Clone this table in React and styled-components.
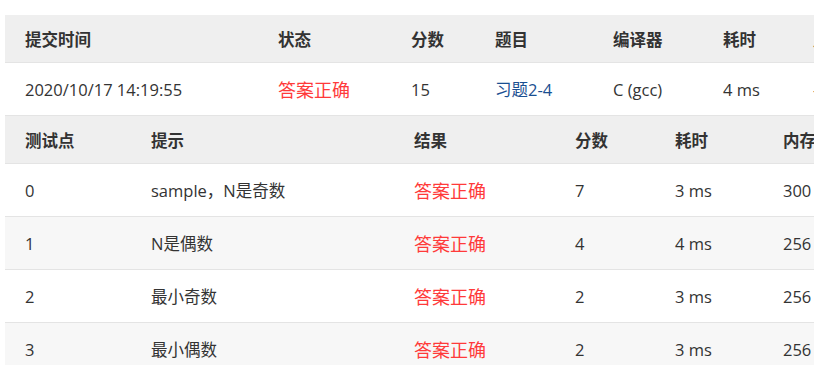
import React from 'react';
import styled, { createGlobalStyle } from 'styled-components';

const GlobalStyle = createGlobalStyle`
  html, body {
    margin: 0;
    padding: 0;
    background: #fff;
    overflow: hidden;
  }
  body {
    font-family: "Open Sans", "Noto Sans CJK SC", sans-serif;
    color: #333;
  }
`;

const Page = styled.div`
  padding: 15px 0 0 5px;
  width: 814px;
  height: 365px;
  box-sizing: border-box;
  overflow: hidden;
`;

const Table = styled.div`
  display: flex;
  flex-direction: column;
  width: max-content;
`;

const Row = styled.div`
  display: grid;
  grid-template-columns: ${p => p.$cols};
  align-items: center;
  height: ${p => (p.$head ? '47px' : '52px')};
  background: ${p => (p.$head ? '#efefef' : p.$odd ? '#f7f7f7' : '#fff')};
  border-bottom: 1px solid #e4e4e4;
`;

const Cell = styled.div`
  padding-left: 20px;
  font-size: 16.5px;
  color: #333;
  white-space: nowrap;
  font-weight: ${p => (p.$head ? 700 : 400)};
`;

const Accepted = styled.span`
  color: #ff3a3a;
  font-size: 18px;
`;

const ProblemLink = styled.a`
  color: #1a4f91;
  font-size: 16.5px;
  text-decoration: none;
`;

const submitCols = '253px 133px 84px 118px 110px 90px 120px';
const caseCols = '126px 263px 161px 100px 108px 120px';

const cases = [
  { id: 0, hint: 'sample，N是奇数', score: 7, time: '3 ms', mem: '300 KB' },
  { id: 1, hint: 'N是偶数', score: 4, time: '4 ms', mem: '256 KB' },
  { id: 2, hint: '最小奇数', score: 2, time: '3 ms', mem: '256 KB' },
  { id: 3, hint: '最小偶数', score: 2, time: '3 ms', mem: '256 KB' },
];

export default function App() {
  return (
    <Page>
      <GlobalStyle />
      <Table>
        <Row $head $cols={submitCols}>
          <Cell $head>提交时间</Cell>
          <Cell $head>状态</Cell>
          <Cell $head>分数</Cell>
          <Cell $head>题目</Cell>
          <Cell $head>编译器</Cell>
          <Cell $head>耗时</Cell>
          <Cell $head>用户</Cell>
        </Row>
        <Row $cols={submitCols}>
          <Cell>2020/10/17 14:19:55</Cell>
          <Cell><Accepted>答案正确</Accepted></Cell>
          <Cell>15</Cell>
          <Cell><ProblemLink href="#">习题2-4</ProblemLink></Cell>
          <Cell>C (gcc)</Cell>
          <Cell>4 ms</Cell>
          <Cell>-</Cell>
        </Row>
      </Table>
      <Table>
        <Row $head $cols={caseCols}>
          <Cell $head>测试点</Cell>
          <Cell $head>提示</Cell>
          <Cell $head>结果</Cell>
          <Cell $head>分数</Cell>
          <Cell $head>耗时</Cell>
          <Cell $head>内存</Cell>
        </Row>
        {cases.map((c, i) => (
          <Row key={c.id} $cols={caseCols} $odd={i % 2 === 1}>
            <Cell>{c.id}</Cell>
            <Cell>{c.hint}</Cell>
            <Cell><Accepted>答案正确</Accepted></Cell>
            <Cell>{c.score}</Cell>
            <Cell>{c.time}</Cell>
            <Cell>{c.mem}</Cell>
          </Row>
        ))}
      </Table>
    </Page>
  );
}
